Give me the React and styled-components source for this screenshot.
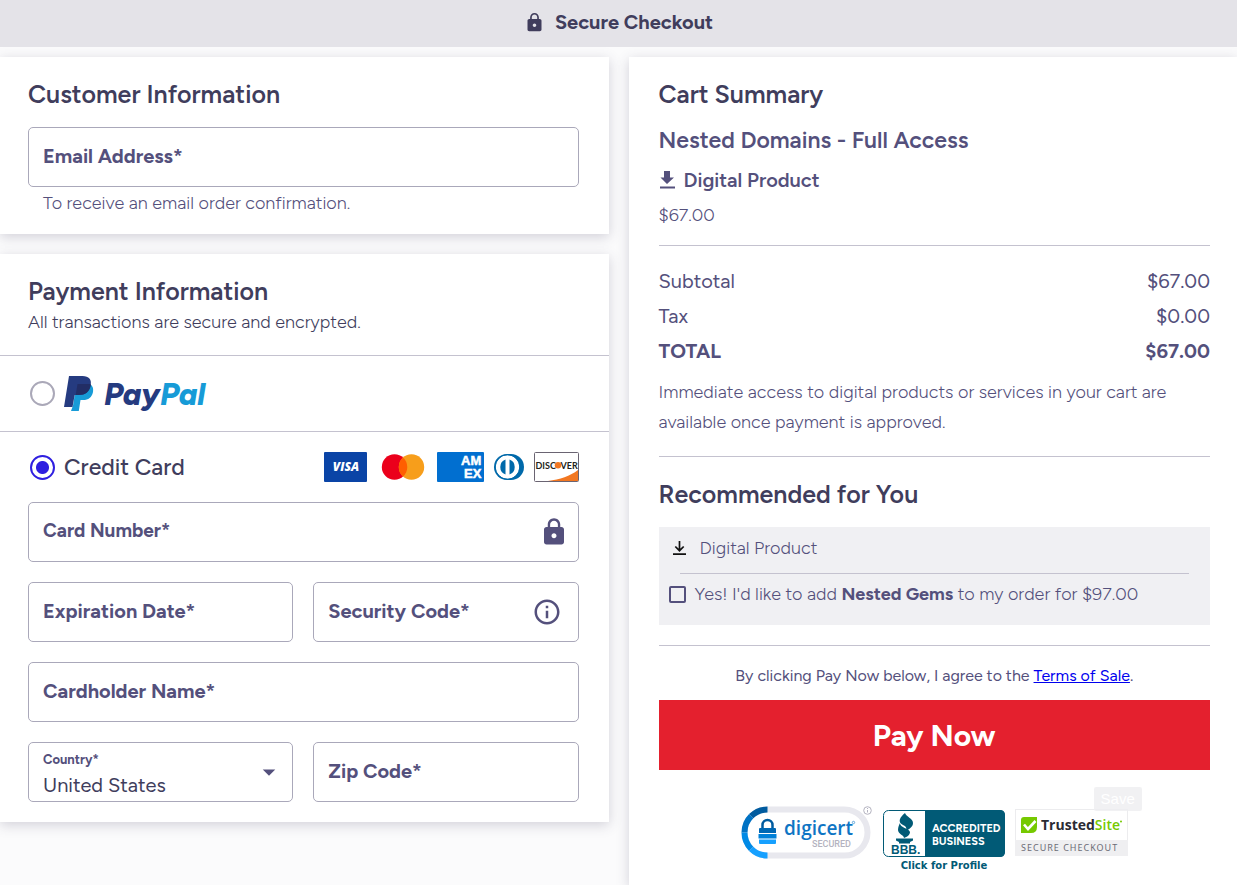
import { useState } from "react";
import styled, { createGlobalStyle } from "styled-components";
import { MdLock, MdInfoOutline, MdArrowDropDown } from "react-icons/md";

const GlobalStyle = createGlobalStyle`
  :root {
    --ink: #403d5c;
    --ink-soft: #54507c;
    --line: #c4c2cf;
    --field: #aaa8ba;
    --accent: #2f1fe0;
    --red: #e4202e;
  }

  *,
  *::before,
  *::after {
    box-sizing: border-box;
  }

  body {
    margin: 0;
    background-color: #fbfbfc;
    color: var(--ink-soft);
    font-family: Figtree, Lato, "Open Sans", sans-serif;
    font-size: 18px;
    font-weight: 300;
  }

  h1,
  h2,
  h3,
  p {
    margin: 0;
  }

  b {
    font-weight: 700;
  }

  svg {
    display: block;
    flex: none;
  }
`;

const Page = styled.div`
  min-height: 100vh;
  display: flex;
  flex-direction: column;
`;

const TopBar = styled.header`
  height: 47px;
  display: flex;
  align-items: center;
  justify-content: center;
  gap: 10px;
  padding-bottom: 3px;
  background-color: #e4e3e8;
  color: var(--ink);
`;

const TopTitle = styled.h1`
  font-size: 20px;
  font-weight: 700;
`;

const Columns = styled.main`
  flex: 1;
  display: grid;
  grid-template-columns: 1fr 1fr;
  gap: 20px;
  padding-top: 10px;
`;

const Column = styled.div`
  display: flex;
  flex-direction: column;
  gap: 20px;
`;

const Card = styled.section`
  background-color: #fff;
  box-shadow: 0 3px 12px rgba(64, 61, 92, 0.22);
`;

const CardBody = styled.div`
  padding: ${(props) => props.$pad};
`;

const Heading = styled.h2`
  color: var(--ink);
  font-size: 25px;
  font-weight: 600;
  line-height: 35px;
`;

const Field = styled.div`
  display: grid;
  grid-template-columns: 1fr auto;
  align-items: center;
  height: 60px;
  border: 1px solid var(--field);
  border-radius: 5px;
  color: var(--ink-soft);

  > svg,
  > button {
    grid-area: 1 / 2;
    margin-right: ${(props) => props.$iconGap || "9px"};
  }
`;

const Label = styled.label`
  grid-area: 1 / 1;
  z-index: 1;
  padding: 0 0 2px 14px;
  font-size: ${(props) => (props.$compact ? "19px" : "20px")};
  font-weight: 700;
  line-height: 24px;
  pointer-events: none;
  visibility: ${(props) => (props.$hidden ? "hidden" : "visible")};
`;

const SmallLabel = styled(Label)`
  align-self: start;
  padding-top: 5px;
  font-size: 13px;
`;

const Input = styled.input`
  grid-area: 1 / 1 / 2 / 3;
  width: 100%;
  height: 100%;
  padding: 0 14px;
  border: 0;
  border-radius: 5px;
  background: transparent;
  color: var(--ink);
  font: inherit;
`;

const Select = styled.select`
  grid-area: 1 / 1 / 2 / 3;
  appearance: none;
  width: 100%;
  height: 100%;
  padding: 26px 14px 0;
  border: 0;
  border-radius: 5px;
  background: transparent;
  color: var(--ink);
  font: inherit;
  font-size: 20px;
  font-weight: 400;
`;

const IconButton = styled.button`
  z-index: 1;
  padding: 0;
  border: 0;
  background: none;
  color: inherit;
`;

const FormRow = styled.div`
  margin-top: 15px;
`;

const Help = styled.p`
  margin-top: 3px;
  padding-left: 15px;
  line-height: 26px;
`;

const SubHeading = styled.p`
  color: var(--ink);
  line-height: 26px;
`;

const MethodRow = styled.div`
  display: flex;
  align-items: center;
  height: ${(props) => props.$height};
  padding: 0 30px;
  border-top: 1px solid var(--line);
`;

const MethodLabel = styled.label`
  display: flex;
  align-items: center;
  flex: 1;
  gap: 9px;
  color: var(--ink);
  font-size: 23px;
  font-weight: 500;
`;

const Radio = styled.input`
  appearance: none;
  flex: none;
  width: 25px;
  height: 25px;
  margin: 0;
  border: 2px solid #aaa8b8;
  border-radius: 50%;

  &:checked {
    border-color: var(--accent);
    background: radial-gradient(circle, var(--accent) 6px, transparent 7px);
  }
`;

const CardLogos = styled.div`
  display: flex;
  gap: 10px;
`;

const Fields = styled.div`
  display: grid;
  grid-template-columns: 1fr 1fr;
  gap: 20px;
  padding: 0 30px 20px 28px;
`;

const Wide = styled.div`
  grid-column: 1 / -1;
`;

const ProductName = styled.h3`
  margin-top: 10px;
  font-size: 23px;
  font-weight: 600;
  line-height: 36px;
`;

const ProductKind = styled.div`
  display: flex;
  align-items: center;
  gap: 8px;
  margin: 7px 0 5px;
  font-size: 20px;
  font-weight: 600;
  line-height: 30px;
`;

const Price = styled.p`
  line-height: 30px;
`;

const Rule = styled.hr`
  margin: ${(props) => props.$margin};
  border: 0;
  border-top: 1px solid var(--line);
`;

const Totals = styled.table`
  width: 100%;
  border-collapse: collapse;
  font-size: 20px;
  line-height: 35px;

  th,
  td {
    padding: 0;
    text-align: left;
    font-weight: 400;
  }

  td {
    text-align: right;
  }

  tr:last-child > * {
    font-weight: 700;
  }
`;

const Note = styled.p`
  margin-top: 8px;
  line-height: 30px;
`;

const Offer = styled.div`
  margin-top: 15px;
  padding-bottom: 11px;
  background-color: #f0f0f3;
`;

const OfferKind = styled.div`
  display: flex;
  align-items: center;
  gap: 13px;
  height: 42px;
  padding-left: 13px;
`;

const OfferChoice = styled.label`
  display: flex;
  align-items: center;
  gap: 9px;
  height: 40px;
  padding-left: 10px;
`;

const Checkbox = styled.input`
  appearance: none;
  width: 17px;
  height: 17px;
  margin: 0;
  border: 2px solid var(--ink-soft);
  border-radius: 2px;

  &:checked {
    background-color: var(--ink-soft);
  }
`;

const Terms = styled.p`
  margin-bottom: 9px;
  font-size: 16px;
  font-weight: 400;
  line-height: 30px;
  text-align: center;

  a {
    color: #0000ee;
  }
`;

const PayButton = styled.button`
  display: block;
  width: 100%;
  height: 70px;
  border: 0;
  background-color: var(--red);
  color: #fff;
  font: inherit;
  font-size: 30px;
  font-weight: 700;
`;

const Badges = styled.div`
  display: flex;
  justify-content: center;
  gap: 10px;
  margin-top: 35px;
`;

const SavableBadge = styled.div`
  position: relative;
`;

const SaveTag = styled.span`
  position: absolute;
  top: -18px;
  right: -14px;
  padding: 0 7px;
  border-radius: 2px;
  background-color: rgba(238, 238, 240, 0.8);
  color: #fff;
  font-family: "Liberation Sans", sans-serif;
  font-size: 15px;
  font-weight: 400;
  line-height: 24px;
`;

const PayPalLogo = () => (
  <svg width="148" height="42" viewBox="0 -3 148 42" role="img" aria-label="PayPal">
    <path
      d="M9 29.500 12.500 8H25c3.500 1 4.700 4 4 8-1.200 5.500-4.500 8-10 8h-2.500l-1.700 11H7z"
      fill="#179bd7"
    />
    <path
      d="M5 0h13.500c6.500 0 9.300 3.500 8.200 9-1.200 7-5.500 10-12 10h-4L8.500 31H0z"
      fill="#253b80"
    />
    <path
      d="M13.500 8H26c1 .3.900.7.700 1.500-1.200 6.500-5.700 9.500-12 9.500h-3z"
      fill="#222d65"
    />
    <text x="40" y="29" fontFamily="Figtree, Lato, sans-serif" fontSize="31" fontWeight="800" fontStyle="italic">
      <tspan fill="#253b80">Pay</tspan>
      <tspan fill="#179bd7">Pal</tspan>
    </text>
  </svg>
);

const VisaLogo = () => (
  <svg width="43" height="30" viewBox="0 0 43 30" role="img" aria-label="Visa">
    <rect width="43" height="30" rx="1" fill="#0a44a6" />
    <text x="22" y="19" textAnchor="middle" fontFamily="Open Sans, sans-serif" fontSize="12" fontWeight="800" fontStyle="italic" fill="#fff">
      VISA
    </text>
  </svg>
);

const MastercardLogo = () => (
  <svg width="50" height="30" viewBox="0 0 50 30" role="img" aria-label="Mastercard">
    <circle cx="17.500" cy="15" r="12.700" fill="#eb001b" />
    <circle cx="34.500" cy="15" r="12.700" fill="#f79e1b" />
    <path d="M26 5.500a12.700 12.700 0 0 1 0 19 12.700 12.700 0 0 1 0-19z" fill="#ff5f00" />
  </svg>
);

const AmexLogo = () => (
  <svg width="47" height="30" viewBox="0 0 47 30" role="img" aria-label="American Express">
    <rect width="47" height="30" rx="1" fill="#016fd0" />
    <g
      fontFamily="Liberation Sans, sans-serif"
      fontSize="13"
      fontWeight="700"
      fill="#fff"
      stroke="#fff"
      strokeWidth=".5"
    >
      <text x="24" y="13">AM</text>
      <text x="27" y="26">EX</text>
    </g>
  </svg>
);

const DinersLogo = () => (
  <svg width="30" height="30" viewBox="0 0 30 30" role="img" aria-label="Diners Club">
    <path d="M13 2h4a13 13 0 0 1 0 26h-4a13 13 0 0 1 0-26z" fill="#0069aa" />
    <circle cx="13.500" cy="15" r="11.800" fill="#fff" />
    <path d="M11.500 7.500v15a8 8 0 0 1 0-15zM15.500 7.500v15a8 8 0 0 0 0-15z" fill="#0069aa" />
    <circle cx="13.500" cy="15" r="12.300" fill="none" stroke="#0069aa" />
  </svg>
);

const DiscoverLogo = () => (
  <svg width="45" height="30" viewBox="0 0 45 30" role="img" aria-label="Discover">
    <rect x=".5" y=".5" width="44" height="29" rx="1" fill="#fff" stroke="#6a6472" />
    <path d="M14 29c12-1.500 22-5 30-11v11z" fill="#f27721" />
    <g fontFamily="Lato, sans-serif" fontSize="9" fontWeight="700" fill="#231f20">
      <text x="1.500" y="16.500">DISC</text>
      <text x="26.500" y="16.500">VER</text>
    </g>
    <circle cx="24" cy="13.300" r="3.200" fill="#f27721" />
  </svg>
);

const SolidDownloadIcon = () => (
  <svg width="17" height="19" viewBox="0 0 17 19" fill="currentColor">
    <path d="M5 0h6v6.500h4L8 13 1.500 6.500H5zM1 15.500h15v2H1z" />
  </svg>
);

const DownloadIcon = () => (
  <svg width="15" height="16" viewBox="0 0 15 16" fill="none" stroke="#111" strokeWidth="1.700">
    <path d="M7.500 1v9.500M3.300 6.500l4.200 4.200 4.200-4.200M1 14.200h13" />
  </svg>
);

const DigicertBadge = () => (
  <svg width="132" height="56" viewBox="0 0 132 56" role="img" aria-label="DigiCert Secured">
    <rect x="3.500" y="4.500" width="123" height="46" rx="23" fill="#fff" stroke="#e8e8ee" strokeWidth="6" />
    <g fill="none" strokeWidth="6">
      <path d="M26.500 4.500A23 23 0 0 0 10.200 11.200" stroke="#005b9f" />
      <path d="M10.200 11.200A23 23 0 0 0 3.500 27.500" stroke="#0072c4" />
      <path d="M3.500 27.500A23 23 0 0 0 10.200 43.800" stroke="#008ae6" />
      <path d="M10.200 43.800A23 23 0 0 0 26.500 50.500" stroke="#16a0ff" />
    </g>
    <path d="M21.500 25v-5a5 5 0 0 1 10 0v5" fill="none" stroke="#005b9f" strokeWidth="2.500" />
    <path d="M18 24q0-1 1-1h15q1 0 1 1v4H18z" fill="#0068b4" />
    <path d="M17.500 29h18v4.500h-18z" fill="#0080d8" />
    <path d="M18 34.500h17V38q0 1-1 1H19q-1 0-1-1z" fill="#16a0ff" />
    <text x="43" y="30" fontFamily="Open Sans, sans-serif" fontSize="19" fontWeight="600" fill="#0e75c4">
      digicert
    </text>
    <text x="71" y="42" fontFamily="Roboto, sans-serif" fontSize="9" fontWeight="500" fill="#b4b3c0">
      SECURED
    </text>
    <circle cx="112.500" cy="17.500" r="1.200" fill="none" stroke="#0e75c4" strokeWidth=".6" />
    <circle cx="126.500" cy="5.500" r="3.800" fill="#fff" stroke="#b4b3c0" />
    <path d="M126.500 5v2.500M126.500 3v1" stroke="#b4b3c0" />
  </svg>
);

const BbbBadge = () => (
  <svg width="122" height="68" viewBox="0 0 122 68" role="img" aria-label="BBB Accredited Business">
    <rect x=".5" y="5.500" width="121" height="46" rx="5" fill="#fff" stroke="#015a76" />
    <path d="M42 5h75q5 0 5 5v37q0 5-5 5H42z" fill="#015a76" />
    <path d="M22 8c1 4 8 5 8 10 0 4-4 6-7 8 1-3 0-5-3-6-6-3-3-8 2-12z" fill="#015a76" />
    <path d="M17 18c0 5 9 5 10 9 0 3-3 5-6 6 0-3-6-4-6-8 0-3 1-5 2-7z" fill="#015a76" />
    <path d="M13 33.500h17v2l-3 1.500v1.500H16V37l-3-1.500z" fill="#015a76" />
    <text x="8" y="48.500" fontFamily="Liberation Sans, sans-serif" fontSize="12" fontWeight="700" fill="#015a76">
      BBB.
    </text>
    <g fontFamily="Figtree, Lato, sans-serif" fontSize="11" fontWeight="700" fill="#fff">
      <text x="49" y="27">ACCREDITED</text>
      <text x="49" y="40">BUSINESS</text>
    </g>
    <text x="61" y="64" textAnchor="middle" fontFamily="DejaVu Sans, sans-serif" fontSize="10" fontWeight="700" fill="#015a76">
      Click for Profile
    </text>
  </svg>
);

const TrustedSiteBadge = () => (
  <svg width="113" height="52" viewBox="0 0 113 52" role="img" aria-label="TrustedSite Secure Checkout">
    <rect x=".5" y="4.500" width="112" height="46" fill="#fff" stroke="#ececee" />
    <path d="M0 35h113v16H0z" fill="#efeff1" />
    <path d="M9 12h13v10q0 6-6 6H6V15q0-3 3-3z" fill="#76c900" />
    <path d="m9 19.500 4 4.500 7.500-8" fill="none" stroke="#fff" strokeWidth="2.600" />
    <text x="26" y="25" fontFamily="Open Sans, sans-serif" fontSize="14" fontWeight="700" fill="#2b2b33">
      Trusted<tspan fill="#76c900" fontWeight="600">Site</tspan>
    </text>
    <circle cx="106" cy="16.500" r="1" fill="#76c900" />
    <text x="6" y="46" fontFamily="Noto Sans, sans-serif" fontSize="9" letterSpacing="1" fontWeight="400" fill="#6c6c76">
      SECURE CHECKOUT
    </text>
  </svg>
);

const TextField = ({ id, label, compact, iconGap, children }) => {
  const [value, setValue] = useState("");

  return (
    <Field $iconGap={iconGap}>
      <Label htmlFor={id} $compact={compact} $hidden={value !== ""}>
        {label}
      </Label>
      <Input id={id} value={value} onChange={(e) => setValue(e.target.value)} />
      {children}
    </Field>
  );
};

const PaymentCard = () => {
  const [method, setMethod] = useState("card");

  return (
    <Card>
      <CardBody $pad="20px 30px 20px 28px">
        <Heading>Payment Information</Heading>
        <SubHeading>All transactions are secure and encrypted.</SubHeading>
      </CardBody>
      <MethodRow $height="76px">
        <MethodLabel>
          <Radio type="radio" name="method" checked={method === "paypal"} onChange={() => setMethod("paypal")} />
          <PayPalLogo />
        </MethodLabel>
      </MethodRow>
      <MethodRow $height="71px">
        <MethodLabel>
          <Radio type="radio" name="method" checked={method === "card"} onChange={() => setMethod("card")} />
          Credit Card
        </MethodLabel>
        <CardLogos>
          <VisaLogo />
          <MastercardLogo />
          <AmexLogo />
          <DinersLogo />
          <DiscoverLogo />
        </CardLogos>
      </MethodRow>
      <Fields>
        <Wide>
          <TextField id="card-number" label="Card Number*" compact>
            <MdLock size={30} />
          </TextField>
        </Wide>
        <TextField id="expiration" label="Expiration Date*" />
        <TextField id="security-code" label="Security Code*" iconGap="16px">
          <IconButton type="button" aria-label="About the security code">
            <MdInfoOutline size={30} />
          </IconButton>
        </TextField>
        <Wide>
          <TextField id="cardholder" label="Cardholder Name*" />
        </Wide>
        <Field $iconGap="8px">
          <SmallLabel htmlFor="country">Country*</SmallLabel>
          <Select id="country" defaultValue="US">
            <option value="US">United States</option>
            <option value="CA">Canada</option>
          </Select>
          <MdArrowDropDown size={30} />
        </Field>
        <TextField id="zip" label="Zip Code*" />
      </Fields>
    </Card>
  );
};

const CartCard = () => (
  <Card>
    <CardBody $pad="20px 27px 0 30px">
      <Heading>Cart Summary</Heading>
      <ProductName>Nested Domains - Full Access</ProductName>
      <ProductKind>
        <SolidDownloadIcon />
        Digital Product
      </ProductKind>
      <Price>$67.00</Price>
      <Rule $margin="15px 0 18px" />
      <Totals>
        <tbody>
          <tr>
            <th scope="row">Subtotal</th>
            <td>$67.00</td>
          </tr>
          <tr>
            <th scope="row">Tax</th>
            <td>$0.00</td>
          </tr>
          <tr>
            <th scope="row">TOTAL</th>
            <td>$67.00</td>
          </tr>
        </tbody>
      </Totals>
      <Note>
        Immediate access to digital products or services in your cart are
        available once payment is approved.
      </Note>
      <Rule $margin="19px 0 20px" />
      <Heading>Recommended for You</Heading>
      <Offer>
        <OfferKind>
          <DownloadIcon />
          Digital Product
        </OfferKind>
        <Rule $margin="4px 21px 0" />
        <OfferChoice>
          <Checkbox type="checkbox" />
          <span>
            Yes! I'd like to add <b>Nested Gems</b> to my order for $97.00
          </span>
        </OfferChoice>
      </Offer>
      <Rule $margin="20px 0 15px" />
      <Terms>
        By clicking Pay Now below, I agree to the <a href="#terms">Terms of Sale</a>.
      </Terms>
      <PayButton type="button">Pay Now</PayButton>
      <Badges>
        <DigicertBadge />
        <BbbBadge />
        <SavableBadge>
          <TrustedSiteBadge />
          <SaveTag>Save</SaveTag>
        </SavableBadge>
      </Badges>
    </CardBody>
  </Card>
);

const App = () => {
  return (
    <Page>
      <GlobalStyle />
      <TopBar>
        <MdLock size={21} />
        <TopTitle>Secure Checkout</TopTitle>
      </TopBar>
      <Columns>
        <Column>
          <Card>
            <CardBody $pad="20px 30px 18px 28px">
              <Heading>Customer Information</Heading>
              <FormRow>
                <TextField id="email" label="Email Address*" />
              </FormRow>
              <Help>To receive an email order confirmation.</Help>
            </CardBody>
          </Card>
          <PaymentCard />
        </Column>
        <CartCard />
      </Columns>
    </Page>
  );
};

export default App;
